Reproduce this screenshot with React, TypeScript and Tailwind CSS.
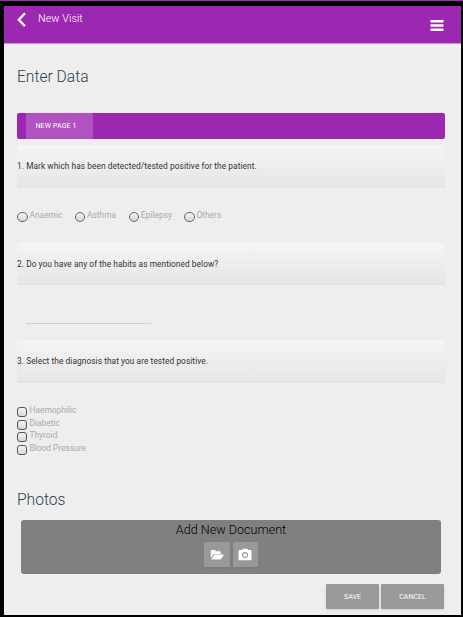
import type { ReactNode } from 'react';

function Question({ className, children }: { className: string; children: ReactNode }) {
  return (
    <div
      className={`flex shrink-0 items-center rounded-t-[2px] border-b border-[#e2e2e2] bg-gradient-to-b from-[#f5f5f5] to-[#e6e6e6] text-[8.3px] tracking-[0.075px] text-[#333] ${className}`}
    >
      <span className="whitespace-pre">{children}</span>
    </div>
  );
}

const radios = [
  { label: 'Anaemic', cell: 'w-[57.5px]', text: 'w-[33px]' },
  { label: 'Asthma', cell: 'w-[54px]', text: 'w-[29px]' },
  { label: 'Epilepsy', cell: 'w-[55.5px]', text: 'w-[31px]' },
  { label: 'Others', cell: 'w-[45px]', text: 'w-[25px]' },
];

const checks = ['Haemophilic', 'Diabetic', 'Thyroid', 'Blood Pressure'];

function FolderOpen() {
  return (
    <svg width="14" height="12" viewBox="0 0 14 12" fill="#fff">
      <path d="M0.8 9.2V2.1C0.8 1.5 1.2 1 1.8 1H4.5C5.2 1 5.6 1.5 5.6 2.2H9.7C10.3 2.2 10.8 2.7 10.8 3.3V4.9H5.2C4.2 4.9 3.5 5.2 2.9 5.9Z" />
      <path d="M1.1 10.5 3.7 6.5C4.1 5.9 4.6 5.6 5.4 5.6H13.1C13.7 5.6 13.8 5.9 13.5 6.4L11.3 9.6C10.9 10.2 10.3 10.5 9.6 10.5Z" />
    </svg>
  );
}

function Camera() {
  return (
    <svg width="14" height="13" viewBox="0 0 14 13">
      <path
        fill="#fff"
        d="M4.9 0.8H9.1L10.3 2.1H12.3C13 2.1 13.5 2.6 13.5 3.3V11C13.5 11.7 13 12.2 12.3 12.2H1.7C1 12.2 0.5 11.7 0.5 11V3.3C0.5 2.6 1 2.1 1.7 2.1H3.7Z"
      />
      <circle cx="7" cy="7.1" r="2.5" fill="#fff" stroke="#999" strokeWidth="1.1" />
    </svg>
  );
}

export default function App() {
  return (
    <div className="flex h-[617px] w-[463px] flex-col overflow-hidden border-t border-[#9c27b0] bg-black pt-[5px] pr-[2px] pb-[2px] pl-1 font-['Roboto','Liberation_Sans',sans-serif]">
      <div className="flex min-h-0 flex-1 flex-col bg-[#eee]">
        <header className="flex h-[38px] shrink-0 items-start justify-between border-b border-[#cf91da] bg-[#9c27b0] pr-[17px] pl-[13px]">
          <div className="flex items-start">
            <svg className="mt-[6px]" width="10" height="16" viewBox="0 0 10 16" fill="none" stroke="#fff" strokeWidth="2.3">
              <path d="M8 1.3 1.8 7.8 8 14.1" />
            </svg>
            <h1 className="mt-[5px] ml-[11px] text-[10.9px] leading-[16px] font-light text-white">New Visit</h1>
          </div>
          <svg className="mt-[14px]" width="14" height="12" viewBox="0 0 14 12" fill="#fff">
            <rect x="0.5" y="0" width="13" height="2.6" rx="0.4" />
            <rect x="0.5" y="4.2" width="13" height="2.6" rx="0.4" />
            <rect x="0.5" y="8.5" width="13" height="2.6" rx="0.4" />
          </svg>
        </header>

        <main className="flex flex-col pr-4 pl-[13px]">
          <h2 className="mt-[22px] h-[22px] text-[15.6px] leading-[22px] font-light text-[#2c3e50]">Enter Data</h2>

          <nav className="mt-[25px] flex h-[26px] rounded-[2px] bg-[#9c27b0] pl-[9px]">
            <button className="w-[67px] bg-[#b052c0] pl-[9.5px] text-left text-[7px] tracking-[0.13px] whitespace-nowrap text-white">
              NEW PAGE 1
            </button>
          </nav>

          <Question className="mt-[6px] h-[43px]">1. Mark which has been detected/tested positive for the patient.</Question>

          <div className="mt-[22px] flex h-[13px] text-[8.4px] leading-[10px] text-[#aaa]">
            {radios.map((r) => (
              <label key={r.label} className={`flex shrink-0 items-start ${r.cell}`}>
                <span className="mt-[1.5px] size-[10.5px] shrink-0 rounded-full border border-[#666] bg-gradient-to-b from-[#f3f3f3] to-[#d8d8d8]" />
                <span className={`ml-[2px] whitespace-nowrap ${r.text}`}>{r.label}</span>
              </label>
            ))}
          </div>

          <Question className="mt-[20px] h-[42px] pt-px">2. Do you have any of the habits as mentioned below?</Question>

          <div className="mt-[18px] ml-[9px] h-[21px] w-[125px] border-b border-[#d0d0d0]" />

          <Question className="mt-[16px] h-[43px]">3. Select the diagnosis that you are tested positive.</Question>

          <div className="mt-[22px] flex flex-col text-[8.4px] leading-[10px] text-[#aaa]">
            {checks.map((c) => (
              <label key={c} className="flex h-[12.7px] items-start">
                <span className="mt-[2px] size-[10px] rounded-[3px] border border-[#555] bg-gradient-to-b from-[#f3f3f3] to-[#d8d8d8]" />
                <span className="ml-[2.5px]">{c}</span>
              </label>
            ))}
          </div>

          <h2 className="mt-[33px] h-[22px] text-[15.6px] leading-[22px] font-light text-[#2c3e50]">Photos</h2>

          <section className="mt-[9px] mr-1 ml-1 flex h-[54px] flex-col items-center rounded-[3px] bg-[#808080]">
            <h3 className="mt-[2px] h-[16px] text-[12.6px] leading-[16px] font-light text-black">Add New Document</h3>
            <div className="mt-[4px] flex gap-[3px]">
              <button className="flex size-[25.5px] items-center justify-center rounded-[1px] bg-[#999] shadow-xs">
                <FolderOpen />
              </button>
              <button className="flex size-[25.5px] items-center justify-center rounded-[1px] bg-[#999] shadow-xs">
                <Camera />
              </button>
            </div>
          </section>

          <footer className="mt-[10px] flex h-[25px] justify-end gap-[2px] pr-[1px] text-[7px] text-white">
            <button className="w-[53px] rounded-[1px] bg-[#999] pt-px shadow-sm">SAVE</button>
            <button className="w-[63px] rounded-[1px] bg-[#999] pt-px shadow-sm">CANCEL</button>
          </footer>
        </main>
      </div>
    </div>
  );
}
